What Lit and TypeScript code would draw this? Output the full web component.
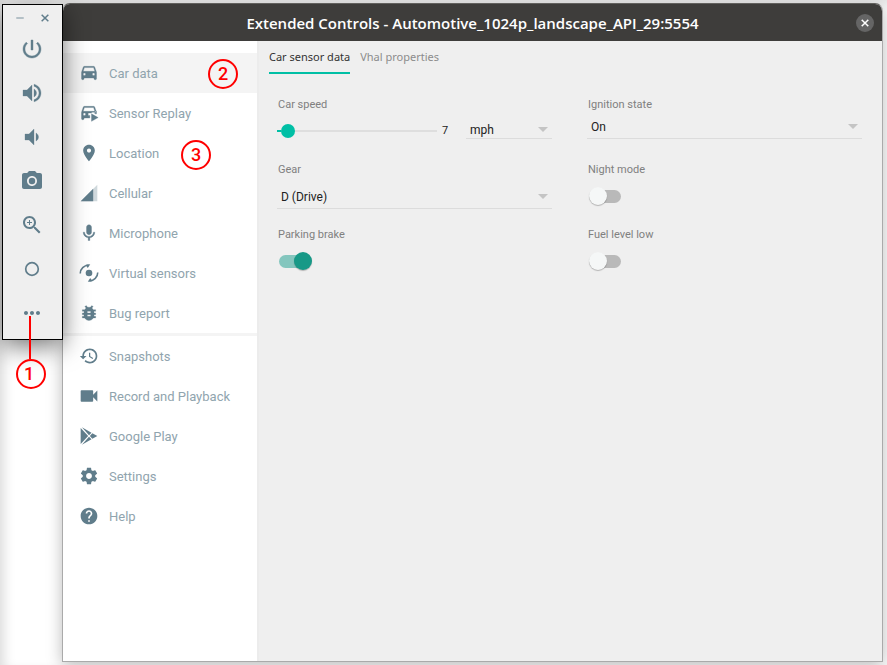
import { LitElement, html, css, svg, TemplateResult } from "lit";
import { customElement, state } from "lit/decorators.js";
import { classMap } from "lit/directives/class-map.js";
import { styleMap } from "lit/directives/style-map.js";

const icons: Record<string, TemplateResult> = {
  power: svg`<path d="M13 3h-2v10h2V3zm4.83 2.17l-1.42 1.42C17.99 7.86 19 9.81 19 12c0 3.87-3.13 7-7 7s-7-3.13-7-7c0-2.19 1.01-4.14 2.58-5.42L6.17 5.17C4.23 6.82 3 9.26 3 12c0 4.97 4.03 9 9 9s9-4.03 9-9c0-2.74-1.23-5.18-3.17-6.83z" stroke="currentColor" stroke-width=".4"/>`,
  volumeUp: svg`<path d="M3 9v6h4l5 5V4L7 9H3zm13.5 3c0-1.77-1.02-3.29-2.5-4.03v8.05c1.48-.73 2.5-2.25 2.5-4.02zM14 3.23v2.06c2.89.86 5 3.54 5 6.71s-2.11 5.85-5 6.71v2.06c4.01-.91 7-4.49 7-8.77s-2.99-7.86-7-8.77z" stroke="currentColor" stroke-width=".3"/>`,
  volumeDown: svg`<path d="M18.5 12c0-1.77-1.02-3.29-2.5-4.03v8.05c1.48-.73 2.5-2.25 2.5-4.02zM5 9v6h4l5 5V4L9 9H5z" stroke="currentColor" stroke-width=".3"/>`,
  camera: svg`<circle cx="12" cy="12" r="3.2"/><path d="M9 2L7.17 4H4c-1.1 0-2 .9-2 2v12c0 1.1.9 2 2 2h16c1.1 0 2-.9 2-2V6c0-1.1-.9-2-2-2h-3.17L15 2H9zm3 15c-2.76 0-5-2.24-5-5s2.24-5 5-5 5 2.24 5 5-2.24 5-5 5z"/>`,
  zoom: svg`<path d="M15.5 14h-.79l-.28-.27C15.41 12.59 16 11.11 16 9.5 16 5.91 13.09 3 9.5 3S3 5.91 3 9.5 5.91 16 9.5 16c1.61 0 3.09-.59 4.23-1.57l.27.28v.79l5 4.99L20.49 19l-4.99-5zm-6 0C7.01 14 5 11.99 5 9.5S7.01 5 9.5 5 14 7.01 14 9.5 11.99 14 9.5 14zm2.5-4h-2v2H9v-2H7V9h2V7h1v2h2v1z"/>`,
  home: svg`<circle cx="12" cy="12" r="6.300" fill="none" stroke="currentColor" stroke-width="1.700"/>`,
  more: svg`<path d="M6 10c-1.1 0-2 .9-2 2s.9 2 2 2 2-.9 2-2-.9-2-2-2zm12 0c-1.1 0-2 .9-2 2s.9 2 2 2 2-.9 2-2-.9-2-2-2zm-6 0c-1.1 0-2 .9-2 2s.9 2 2 2 2-.9 2-2-.9-2-2-2z"/>`,
  minimize: svg`<path d="M3 10.500h18v3H3z" opacity=".65"/>`,
  close: svg`<path d="M4 4l16 16M20 4L4 20" fill="none" stroke="currentColor" stroke-width="3.600"/>`,
  car: svg`<path d="M18.92 5.01C18.72 4.42 18.16 4 17.5 4h-11c-.66 0-1.21.42-1.42 1.01L3 11v8c0 .55.45 1 1 1h1c.55 0 1-.45 1-1v-1h12v1c0 .55.45 1 1 1h1c.55 0 1-.45 1-1v-8l-2.080-5.990zM6.500 15c-.83 0-1.500-.67-1.500-1.500S5.670 12 6.500 12s1.500.67 1.500 1.500S7.330 15 6.500 15zm11 0c-.83 0-1.500-.67-1.500-1.500s.67-1.500 1.500-1.500 1.500.67 1.500 1.500-.67 1.500-1.500 1.500zM5 10l1.500-4.500h11L19 10H5z" stroke="currentColor" stroke-width=".4"/>`,
  replay: svg`<path d="M18.920 5.010C18.720 4.420 18.160 4 17.500 4h-11c-.66 0-1.210.42-1.420 1.010L3 11v8c0 .55.45 1 1 1h1c.55 0 1-.45 1-1v-1h7v-3h-2v-3h4v-1h6zM6.500 15c-.83 0-1.500-.67-1.500-1.500S5.670 12 6.500 12s1.500.67 1.500 1.500S7.330 15 6.500 15zM5 10l1.500-4.500h11L19 10zM15 13l8 4.500-8 4.500zM19 10h2v3h-2z" stroke="currentColor" stroke-width=".4"/>`,
  place: svg`<path d="M12 2C8.130 2 5 5.130 5 9c0 5.250 7 13 7 13s7-7.750 7-13c0-3.870-3.130-7-7-7zm0 9.500c-1.380 0-2.500-1.120-2.500-2.500s1.120-2.500 2.500-2.500 2.500 1.120 2.500 2.500-1.120 2.500-2.500 2.500z"/>`,
  signal: svg`<path d="M2 22h20V2z" opacity=".3"/><path d="M17 7L2 22h15z"/>`,
  mic: svg`<path d="M12 14c1.660 0 3-1.340 3-3V5c0-1.660-1.340-3-3-3S9 3.340 9 5v6c0 1.660 1.340 3 3 3zm5.300-3c0 3-2.540 5.100-5.300 5.100S6.700 14 6.700 11H5c0 3.410 2.720 6.230 6 6.720V21h2v-3.280c3.280-.48 6-3.300 6-6.720h-1.700z" stroke="currentColor" stroke-width=".4"/>`,
  rotate: svg`<circle cx="12" cy="12" r="4"/><path d="M1.500 12.500C1.500 7 6 3 11.500 2.500M22.500 11.500C22.500 17 18 21 12.500 21.500" fill="none" stroke="currentColor" stroke-width="1.900"/><path d="M8 2.200l5.500-.700L10.500 6zM16 21.800l-5.500.700L13.500 18z"/>`,
  bug: svg`<path d="M20 8h-2.810c-.45-.78-1.070-1.450-1.820-1.960L17 4.410 15.590 3l-2.170 2.170C12.960 5.060 12.490 5 12 5c-.49 0-.96.06-1.410.17L8.410 3 7 4.410l1.620 1.630C7.880 6.550 7.260 7.220 6.810 8H4v2h2.090c-.05.33-.09.66-.09 1v1H4v2h2v1c0 .34.04.67.09 1H4v2h2.810c1.040 1.790 2.970 3 5.190 3s4.150-1.210 5.190-3H20v-2h-2.090c.05-.33.09-.66.09-1v-1h2v-2h-2v-1c0-.34-.04-.67-.09-1H20V8zm-6 8h-4v-2h4v2zm0-4h-4v-2h4v2z" stroke="currentColor" stroke-width=".3"/>`,
  history: svg`<path d="M13 3c-4.970 0-9 4.030-9 9H1l3.890 3.890.07.14L9 12H6c0-3.870 3.130-7 7-7s7 3.130 7 7-3.130 7-7 7c-1.930 0-3.680-.79-4.940-2.060l-1.420 1.420C8.270 19.990 10.510 21 13 21c4.970 0 9-4.030 9-9s-4.030-9-9-9zm-1 5v5l4.280 2.540.72-1.210-3.500-2.080V8H12z"/>`,
  video: svg`<path d="M17 10.500V6c0-.55-.45-1-1-1H3c-.55 0-1 .45-1 1v12c0 .55.45 1 1 1h13c.55 0 1-.45 1-1v-4.500l5 5v-13l-5 5z"/>`,
  play: svg`<path d="M2 2.500v19L11 12zM3.500 1.500L12 11l3-3zM3.500 22.500L12 13l3 3zM16 8.600L13 12l3 3.400 6-3.400z"/>`,
  settings: svg`<path d="M19.430 12.980c.04-.32.07-.64.07-.98s-.03-.66-.07-.98l2.110-1.650c.19-.15.24-.42.12-.64l-2-3.460c-.12-.22-.39-.3-.61-.22l-2.490 1c-.52-.4-1.080-.73-1.690-.98l-.38-2.650C14.460 2.180 14.250 2 14 2h-4c-.25 0-.46.18-.49.42l-.38 2.650c-.61.25-1.170.59-1.690.98l-2.490-1c-.23-.09-.49 0-.61.22l-2 3.460c-.13.22-.07.49.12.64l2.110 1.650c-.04.32-.07.65-.07.98s.03.66.07.98l-2.110 1.650c-.19.15-.24.42-.12.64l2 3.460c.12.22.39.3.61.22l2.490-1c.52.4 1.080.73 1.690.98l.38 2.650c.03.24.24.42.49.42h4c.25 0 .46-.18.49-.42l.38-2.650c.61-.25 1.170-.59 1.690-.98l2.490 1c.23.09.49 0 .61-.22l2-3.460c.12-.22.07-.49-.12-.64l-2.110-1.650zM12 15.500c-1.930 0-3.500-1.570-3.500-3.500s1.570-3.500 3.500-3.500 3.500 1.570 3.500 3.500-1.570 3.500-3.500 3.500z"/>`,
  help: svg`<path d="M12 2C6.480 2 2 6.480 2 12s4.480 10 10 10 10-4.480 10-10S17.520 2 12 2zm1 17h-2v-2h2v2zm2.070-7.750l-.9.92C13.450 12.900 13 13.500 13 15h-2v-.5c0-1.100.45-2.100 1.170-2.830l1.240-1.260c.37-.36.59-.86.59-1.410 0-1.100-.9-2-2-2s-2 .9-2 2H8c0-2.210 1.790-4 4-4s4 1.790 4 4c0 .88-.36 1.680-.93 2.250z"/>`,
};

const icon = (name: string) =>
  html`<svg class="icon ${name}" viewBox="0 0 24 24" aria-hidden="true">${icons[name]}</svg>`;

interface NavItem {
  icon: string;
  label: string;
  mark?: string;
}

const deviceNav: NavItem[] = [
  { icon: "car", label: "Car data", mark: "2" },
  { icon: "replay", label: "Sensor Replay" },
  { icon: "place", label: "Location", mark: "3" },
  { icon: "signal", label: "Cellular" },
  { icon: "mic", label: "Microphone" },
  { icon: "rotate", label: "Virtual sensors" },
  { icon: "bug", label: "Bug report" },
];

const generalNav: NavItem[] = [
  { icon: "history", label: "Snapshots" },
  { icon: "video", label: "Record and Playback" },
  { icon: "play", label: "Google Play" },
  { icon: "settings", label: "Settings" },
  { icon: "help", label: "Help" },
];

const base = css`
  * {
    box-sizing: border-box;
  }
  button {
    border: 0;
    padding: 0;
    background: none;
    color: inherit;
    font: inherit;
    cursor: pointer;
  }
  .icon {
    display: block;
    fill: currentColor;
    flex: none;
  }
  .mark {
    position: absolute;
    display: flex;
    align-items: center;
    justify-content: center;
    width: 30px;
    height: 30px;
    border: 2px solid #f00;
    border-radius: 50%;
    color: #f00;
    font: 500 18px/20px Roboto, sans-serif;
  }
`;

@customElement("emulator-toolbar")
export class EmulatorToolbar extends LitElement {
  static styles = [
    base,
    css`
      :host {
        display: block;
        position: relative;
        z-index: 1;
        box-sizing: border-box;
        width: 61px;
        flex: none;
        border: 1px solid #000;
        background: #efefef;
        color: #607d8b;
        box-shadow: 0 6px 24px rgba(0, 0, 0, 0.55);
        padding: 4px 1px 4px 0;
      }
      .window {
        display: flex;
        justify-content: space-between;
        padding: 0 11px 0 12px;
        height: 18px;
        align-items: center;
      }
      .window .icon {
        width: 10px;
        height: 10px;
      }
      .tools {
        display: flex;
        flex-direction: column;
      }
      .tool {
        height: 44px;
        display: flex;
        align-items: center;
        justify-content: center;
        position: relative;
      }
      .tool .icon {
        width: 24px;
        height: 24px;
      }
      .lead {
        position: absolute;
        top: 25px;
        left: 26px;
        width: 2px;
        height: 43px;
        background: #f00;
      }
      .mark {
        top: 68px;
        left: 13px;
        padding-right: 4px;
      }
    `,
  ];

  render() {
    const tools: [string, string][] = [
      ["power", "Power"],
      ["volumeUp", "Volume up"],
      ["volumeDown", "Volume down"],
      ["camera", "Take screenshot"],
      ["zoom", "Zoom"],
      ["home", "Home"],
      ["more", "More"],
    ];
    return html`
      <div class="window">
        <button aria-label="Minimize">${icon("minimize")}</button>
        <button aria-label="Close">${icon("close")}</button>
      </div>
      <div class="tools">
        ${tools.map(
          ([name, label]) => html`<button class="tool" aria-label=${label}>
            ${icon(name)}
            ${name === "more" ? html`<span class="lead"></span><span class="mark">1</span>` : ""}
          </button>`
        )}
      </div>
    `;
  }
}

@customElement("side-nav")
export class SideNav extends LitElement {
  static styles = [
    base,
    css`
      :host {
        display: block;
        width: 194px;
        flex: none;
        background: #fff;
        padding-top: 12px;
        font: 13px/20px Roboto, sans-serif;
        color: #90a4ae;
      }
      .item {
        position: relative;
        display: flex;
        align-items: center;
        gap: 10px;
        width: 100%;
        height: 40px;
        padding-left: 16px;
      }
      .item.active {
        background: #f4f4f4;
      }
      .item .icon {
        width: 20px;
        height: 20px;
        color: #607d8b;
      }
      .text {
        padding-top: 2px;
      }
      .rule {
        height: 3px;
        margin: 0;
        border: 0;
        background: #f4f4f4;
      }
      .mark {
        left: 118px;
        top: 7px;
      }
      .active .mark {
        left: 145px;
        top: 6px;
      }
    `,
  ];

  @state() private active = "Car data";

  private item(entry: NavItem) {
    return html`<button
      class=${classMap({ item: true, active: entry.label === this.active })}
      @click=${() => (this.active = entry.label)}
    >
      ${icon(entry.icon)}<span class="text">${entry.label}</span>
      ${entry.mark ? html`<span class="mark">${entry.mark}</span>` : ""}
    </button>`;
  }

  render() {
    return html`<nav>
      ${deviceNav.map((e) => this.item(e))}
      <hr class="rule" />
      ${generalNav.map((e) => this.item(e))}
    </nav>`;
  }
}

@customElement("car-data-panel")
export class CarDataPanel extends LitElement {
  static styles = [
    base,
    css`
      :host {
        display: block;
        flex: 1;
        min-width: 0;
        border-left: 2px solid #ececec;
        background: #efefef;
        font: 11px/16px Roboto, sans-serif;
        color: #808080;
      }
      .tabs {
        display: flex;
        gap: 10px;
        padding-left: 10px;
        font: 11px/16px "Noto Sans", sans-serif;
      }
      .tab {
        height: 33px;
        padding-top: 1px;
        border-bottom: 2px solid transparent;
        color: #8c8c8c;
      }
      .tab.active {
        border-color: #00bfa5;
        color: #333;
      }
      .form {
        display: grid;
        grid-template-columns: 1fr 1fr;
        grid-auto-rows: 65px;
        column-gap: 35px;
        padding: 23px 20px 0 18px;
      }
      .label {
        display: block;
        padding-left: 1px;
      }
      .row {
        display: flex;
        align-items: center;
      }
      select {
        appearance: none;
        display: block;
        width: 100%;
        height: 24px;
        margin: 0;
        padding: 0 20px 0 4px;
        border: 0;
        border-bottom: 1px solid #dcdcdc;
        border-radius: 0;
        background: transparent;
        color: #212121;
        font: 12px/20px Roboto, sans-serif;
      }
      .picker {
        position: relative;
        display: block;
        margin-top: 2px;
      }
      .picker::after {
        content: "";
        position: absolute;
        right: 4px;
        top: 9px;
        border: 5px solid transparent;
        border-top-color: #c4c4c4;
        border-bottom-width: 0;
        pointer-events: none;
      }
      .picker.low {
        margin-top: 7px;
      }
      .picker.unit {
        width: 86px;
      }
      .unit select {
        padding-top: 5px;
      }
      .unit::after {
        top: 12px;
      }
      .speed {
        flex: 1;
        min-width: 0;
        height: 14px;
        margin: 10px 0 0;
        appearance: none;
        background: linear-gradient(#00bfa5, #00bfa5) 0 6px / var(--fill) 2px no-repeat,
          linear-gradient(#dedede, #dedede) 0 6px / 100% 2px no-repeat;
      }
      .speed::-webkit-slider-thumb {
        appearance: none;
        width: 14px;
        height: 14px;
        border-radius: 50%;
        background: #00bfa5;
      }
      .value {
        width: 29px;
        padding: 10px 0 0 5px;
        color: #212121;
      }
      .switch {
        appearance: none;
        display: block;
        position: relative;
        width: 32px;
        height: 13px;
        margin: 12px 0 0 2px;
        border-radius: 7px;
        background: #b9b9b9;
      }
      .switch::before {
        content: "";
        position: absolute;
        left: 0;
        top: -3px;
        width: 18px;
        height: 18px;
        border-radius: 50%;
        background: #f5f7f7;
        box-shadow: 0 1px 1px rgba(0, 0, 0, 0.25);
      }
      .switch:checked {
        background: #84c6be;
      }
      .switch:checked::before {
        left: 15px;
        background: #179987;
      }
    `,
  ];

  @state() private speed = 7;
  private readonly maxSpeed = 260;

  private toggle(id: string, label: string, on = false) {
    return html`<div>
      <label class="label" for=${id}>${label}</label>
      <input class="switch" type="checkbox" role="switch" id=${id} ?checked=${on} />
    </div>`;
  }

  render() {
    const fill = { "--fill": `${(this.speed / this.maxSpeed) * 100}%` };
    return html`
      <div class="tabs" role="tablist">
        <button class="tab active" role="tab" aria-selected="true">Car sensor data</button>
        <button class="tab" role="tab" aria-selected="false">Vhal properties</button>
      </div>
      <div class="form">
        <div>
          <label class="label" for="speed">Car speed</label>
          <div class="row">
            <input
              class="speed"
              id="speed"
              type="range"
              min="0"
              max=${this.maxSpeed}
              .value=${String(this.speed)}
              style=${styleMap(fill)}
              @input=${(e: Event) => (this.speed = Number((e.target as HTMLInputElement).value))}
            />
            <output class="value" for="speed">${this.speed}</output>
            <span class="picker unit"
              ><select aria-label="Speed unit">
                <option>mph</option>
                <option>km/h</option>
              </select></span
            >
          </div>
        </div>
        <div>
          <label class="label" for="ignition">Ignition state</label>
          <span class="picker"
            ><select id="ignition">
              <option>On</option>
              <option>Off</option>
            </select></span
          >
        </div>
        <div>
          <label class="label" for="gear">Gear</label>
          <span class="picker low"
            ><select id="gear">
              <option>D (Drive)</option>
              <option>P (Park)</option>
            </select></span
          >
        </div>
        ${this.toggle("night", "Night mode")} ${this.toggle("brake", "Parking brake", true)}
        ${this.toggle("fuel", "Fuel level low")}
      </div>
    `;
  }
}

@customElement("app-root")
export class AppRoot extends LitElement {
  static styles = [
    base,
    css`
      :host {
        display: flex;
        align-items: flex-start;
        box-sizing: border-box;
        min-height: 100vh;
        padding: 3px 4px 3px 2px;
        overflow: hidden;
        background: #fff;
        box-shadow: inset 6px 4px 12px -2px rgba(0, 0, 0, 0.14);
      }
      emulator-toolbar {
        margin-top: 1px;
      }
      .dialog {
        display: flex;
        flex-direction: column;
        align-self: stretch;
        flex: 1;
        min-width: 0;
        margin-left: -1px;
        border: 1px solid #aaa;
        border-top-color: #62615e;
        border-radius: 8px 8px 0 0;
        box-shadow: 0 3px 16px rgba(0, 0, 0, 0.27);
      }
      .titlebar {
        display: grid;
        grid-template-columns: 1fr auto 1fr;
        align-items: center;
        height: 37px;
        padding: 0 8px;
        border-radius: 7px 7px 0 0;
        background: #3e3d3b;
        color: #fff;
      }
      .title {
        grid-column: 2;
        margin: 0;
        font: 600 15px/20px "Open Sans", sans-serif;
      }
      .close {
        justify-self: end;
        display: flex;
        align-items: center;
        justify-content: center;
        width: 18px;
        height: 18px;
        border-radius: 50%;
        background: #656565;
      }
      .close .icon {
        width: 10px;
        height: 10px;
      }
      .body {
        display: flex;
        flex: 1;
      }
    `,
  ];

  render() {
    return html`
      <emulator-toolbar></emulator-toolbar>
      <main class="dialog">
        <header class="titlebar">
          <h1 class="title">Extended Controls - Automotive_1024p_landscape_API_29:5554</h1>
          <button class="close" aria-label="Close window">${icon("close")}</button>
        </header>
        <div class="body">
          <side-nav></side-nav>
          <car-data-panel></car-data-panel>
        </div>
      </main>
    `;
  }
}
